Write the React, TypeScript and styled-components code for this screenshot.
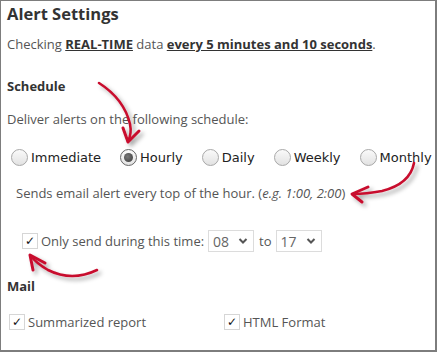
import React from "react";
import styled, { createGlobalStyle } from "styled-components";

const Global = createGlobalStyle`
  html, body { margin: 0; padding: 0; background: #fff; }
  body { font-family: "Open Sans", "Noto Sans", sans-serif; }
  * { box-sizing: border-box; }
`;

const Panel = styled.div`
  position: relative;
  width: 437px;
  height: 352px;
  border-style: solid;
  border-color: #7d7d7d;
  border-width: 1px 2px 2px 1px;
  padding: 3px 0 0 6px;
  color: #555;
  font-size: 13px;
  overflow: hidden;
`;

const Title = styled.div`
  font-size: 16.5px;
  font-weight: 700;
  line-height: 20px;
  color: #333;
`;

const Line = styled.div<{ $mt: number; $indent?: number }>`
  margin-top: ${(p) => p.$mt}px;
  padding-left: ${(p) => p.$indent ?? 0}px;
  line-height: 20px;
  white-space: nowrap;
`;

const Strong = styled.span`
  font-weight: 700;
  color: #333;
  text-decoration: underline;
`;

const Heading = styled.div<{ $mt: number }>`
  margin-top: ${(p) => p.$mt}px;
  font-weight: 700;
  line-height: 20px;
  color: #333;
`;

const RadioRow = styled.div`
  margin-top: 18px;
  padding-left: 4px;
  display: flex;
  align-items: center;
  height: 20px;
  gap: 19px;
`;

const RadioOption = styled.label`
  display: flex;
  align-items: center;
  gap: 3px;
  font-family: "DejaVu Sans", Verdana, sans-serif;
  font-size: 13px;
  color: #222;
  white-space: nowrap;
`;

const RadioCircle = styled.span<{ $checked?: boolean }>`
  width: 17px;
  height: 17px;
  border-radius: 50%;
  border: 1px solid ${(p) => (p.$checked ? "#666" : "#a8a8a8")};
  background: linear-gradient(#fafafa, #e2e2e2);
  display: flex;
  align-items: center;
  justify-content: center;
  flex: none;
  &::after {
    content: "";
    display: ${(p) => (p.$checked ? "block" : "none")};
    width: 9px;
    height: 9px;
    border-radius: 50%;
    background: radial-gradient(circle at 40% 40%, #777, #3a3a3a);
  }
`;

const Italic = styled.i``;

const TimeRow = styled.div`
  margin-top: 27px;
  padding-left: 15px;
  display: flex;
  align-items: center;
  height: 22px;
  white-space: nowrap;
`;

const Check = styled.span`
  width: 16px;
  height: 16px;
  border: 1px solid #d6d6d6;
  background: #fff;
  color: #111;
  font-family: "DejaVu Sans", sans-serif;
  font-size: 12px;
  line-height: 14px;
  text-align: center;
  flex: none;
`;

const CheckLabel = styled.span<{ $gap?: number }>`
  margin-left: ${(p) => p.$gap ?? 3}px;
  font-size: 13px;
  color: #555;
`;

const Select = styled.div<{ $ml: number }>`
  margin-left: ${(p) => p.$ml}px;
  width: 46px;
  height: 22px;
  border: 1px solid #dcdcdc;
  display: flex;
  align-items: center;
  justify-content: space-between;
  padding: 0 5px 0 4px;
  font-size: 14px;
  color: #666;
`;

const Chevron = styled.svg`
  width: 10px;
  height: 8px;
`;

const To = styled.span`
  margin-left: 5px;
  font-size: 13px;
  color: #555;
`;

const MailRow = styled.div`
  margin-top: 16px;
  padding-left: 2px;
  display: grid;
  grid-template-columns: 215px auto;
  height: 20px;
  align-items: center;
`;

const MailItem = styled.div`
  display: flex;
  align-items: center;
  white-space: nowrap;
`;

const Overlay = styled.svg`
  position: absolute;
  left: -1px;
  top: -1px;
  width: 437px;
  height: 352px;
  pointer-events: none;
`;

const ChevronIcon = () => (
  <Chevron viewBox="0 0 10 8">
    <path d="M1.5 2 L5 5.5 L8.5 2" fill="none" stroke="#555" strokeWidth="2" />
  </Chevron>
);

const options = ["Immediate", "Hourly", "Daily", "Weekly", "Monthly"];

export default function App() {
  return (
    <>
      <Global />
      <Panel>
        <Title>Alert Settings</Title>
        <Line $mt={10}>
          Checking <Strong>REAL-TIME</Strong> data{" "}
          <Strong>every 5 minutes and 10 seconds</Strong>.
        </Line>
        <Heading $mt={22}>Schedule</Heading>
        <Line $mt={13}>Deliver alerts on the following schedule:</Line>
        <RadioRow>
          {options.map((o) => (
            <RadioOption key={o}>
              <RadioCircle $checked={o === "Hourly"} />
              {o}
            </RadioOption>
          ))}
        </RadioRow>
        <Line $mt={16} $indent={9}>
          Sends email alert every top of the hour. (<Italic>e.g. 1:00, 2:00</Italic>)
        </Line>
        <TimeRow>
          <Check>✓</Check>
          <CheckLabel>Only send during this time:</CheckLabel>
          <Select $ml={4}>
            08
            <ChevronIcon />
          </Select>
          <To>to</To>
          <Select $ml={4}>
            17
            <ChevronIcon />
          </Select>
        </TimeRow>
        <Heading $mt={24}>Mail</Heading>
        <MailRow>
          <MailItem>
            <Check>✓</Check>
            <CheckLabel>Summarized report</CheckLabel>
          </MailItem>
          <MailItem>
            <Check>✓</Check>
            <CheckLabel>HTML Format</CheckLabel>
          </MailItem>
        </MailRow>
        <Overlay viewBox="0 0 437 352">
          <defs>
            <filter id="sh" x="-30%" y="-30%" width="160%" height="160%">
              <feDropShadow dx="3" dy="3" stdDeviation="2" floodColor="#000" floodOpacity="0.35" />
            </filter>
          </defs>
          <g
            fill="none"
            stroke="#c8102e"
            strokeWidth="3"
            strokeLinecap="round"
            strokeLinejoin="round"
            filter="url(#sh)"
          >
            <path d="M99 83 Q124 99 130 124 Q132 134 128 141" strokeWidth="2.6" />
            <path d="M123 128 L128 142 L139 131" />
            <path d="M414 163 Q410 184 382 191 Q366 194 353 194" strokeWidth="2.6" />
            <path d="M368 187 L352 194 L362 202" />
            <path d="M97 270 Q72 282 48 270 Q36 263 31 256" strokeWidth="2.6" />
            <path d="M45 263 L30 255 L33 270" />
          </g>
        </Overlay>
      </Panel>
    </>
  );
}
